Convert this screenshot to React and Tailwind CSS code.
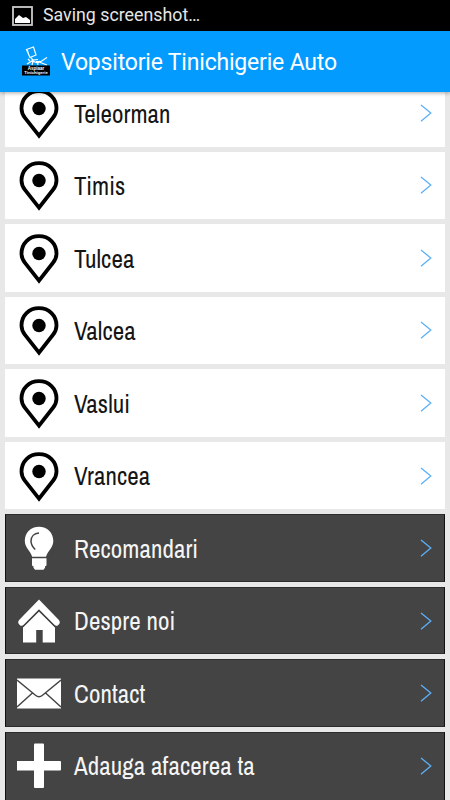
import React from "react";

const PinIcon = () => (
  <svg width="44" height="52" viewBox="0 0 44 52" fill="none">
    <path
      d="M22 48.600 8 30.800C5.400 27.600 4.500 25.400 4.500 21.500 4.500 11.500 12 4.200 22 4.200s17.500 7.300 17.500 17.300c0 3.900-.9 6.100-3.500 9.300z"
      stroke="#000"
      strokeWidth="3.8"
    />
    <circle cx="22" cy="21.500" r="6.700" fill="#000" />
  </svg>
);

const BulbIcon = () => (
  <svg width="44" height="52" viewBox="0 0 44 52" fill="none">
    <path
      d="M22 4.700c8.200 0 14.300 6.100 14.300 14 0 7-5.300 9.500-7.300 16H15.200c-2-6.500-7.400-9-7.400-16 0-7.900 6-14 14.200-14zM15 36.200h14.500v6.500a1.500 1.500 0 0 1-1.500 1.500v1.500l-1.500 2h-8.500l-1.500-2v-1.500a1.500 1.500 0 0 1-1.500-1.500z"
      fill="#fff"
    />
    <path d="M22 11c-5 .3-8 3.700-8 8.200 0 3.300 1.500 5.500 4.200 8.300" stroke="#444" strokeWidth="1.500" />
  </svg>
);

const HouseIcon = () => (
  <svg width="44" height="52" viewBox="0 0 44 52" fill="none">
    <path d="m22 16.500 16 16v15H25.700V35h-6.500v12.500H6v-15z" fill="#fff" />
    <path d="M4.800 27.200 22 9.500l17.200 17.700" stroke="#fff" strokeWidth="6.800" strokeLinecap="round" />
    <path d="M4.500 32.800 22 15.500l17.500 17.300" stroke="#444" strokeWidth="1.200" />
  </svg>
);

const MailIcon = () => (
  <svg width="44" height="52" viewBox="0 0 44 52" fill="none">
    <path d="M0 11.500h44v30H0z" fill="#fff" />
    <path
      d="m0 13 18.500 15.300c2.300 1.900 4.700 1.900 7 0L44 13M0 40l15.700-14.200M44 40 28.300 25.800"
      stroke="#444"
      strokeWidth="1.400"
    />
  </svg>
);

const PlusIcon = () => (
  <svg width="44" height="52" viewBox="0 0 44 52" fill="#fff">
    <rect x="17" y="3.500" width="10" height="44.500" rx="1" />
    <rect x="-.5" y="21" width="44.500" height="9.500" rx="1" />
  </svg>
);

const ChevronIcon = () => (
  <svg width="12" height="20" viewBox="0 0 12 20" fill="none">
    <path d="m1 2 9.800 8L1 18.200" stroke="#5cb0f8" strokeWidth="1.300" />
  </svg>
);

const AppLogo = () => (
  <svg width="30" height="32" viewBox="0 0 30 32" fill="none">
    <path
      d="m5.500 3.500 7-2.500 2.500 8-6 2.500zM6 3l1.500 5M10 12l2 2 5-.5M6 18l5-3 6 2 2-2M9 15l-2-2M15 15.500h5l6-4M18 16l8 3M12 15l-1 4M16 16l1 3"
      stroke="#fff"
      strokeWidth="1.200"
    />
    <rect x="1" y="19.500" width="28" height="10" fill="#000" />
    <text x="15" y="24" textAnchor="middle" fontSize="4.500" fontWeight="700" fill="#fff" fontFamily="Liberation Sans, sans-serif">
      Aspiaar
    </text>
    <text x="15" y="28.300" textAnchor="middle" fontSize="4.200" fontWeight="700" fill="#fff" fontFamily="Liberation Sans, sans-serif">
      Tinichigerie
    </text>
  </svg>
);

const counties = ["Teleorman", "Timis", "Tulcea", "Valcea", "Vaslui", "Vrancea"];

const links = [
  { name: "Recomandari", icon: <BulbIcon /> },
  { name: "Despre noi", icon: <HouseIcon /> },
  { name: "Contact", icon: <MailIcon /> },
  { name: "Adauga afacerea ta", icon: <PlusIcon /> },
];

const App = () => {
  return (
    <div className="flex h-[800px] w-[450px] flex-col overflow-hidden bg-[#e8e8e8]">
      {/* Status bar */}
      <div className="flex h-[31px] shrink-0 items-center bg-black pl-3 font-['Roboto',sans-serif] text-[17.800px] text-[#e6e6e6]">
        <svg width="21" height="20" viewBox="0 0 21 20" fill="none">
          <rect x="1" y="1" width="19" height="18" stroke="#ccc" strokeWidth="1.800" />
          <path d="M3 17v-4l4-4 4 3 3-1 4 3v3z" fill="#fff" />
        </svg>
        <span className="ml-[10px] whitespace-nowrap pb-px">Saving screenshot…</span>
      </div>

      {/* App bar */}
      <header className="z-10 flex h-[61px] shrink-0 items-center bg-[#049bff] pl-[21px] font-['Roboto',sans-serif] text-white shadow-[0_1px_4px_rgba(0,0,0,0.35)]">
        <AppLogo />
        <h1 className="ml-[10px] whitespace-nowrap pt-[3px] text-[23px] tracking-[-0.190px]">Vopsitorie Tinichigerie Auto</h1>
      </header>

      <main className="min-h-0 flex-1 overflow-hidden px-[5px]">
        <ul className="-mt-[13px] flex flex-col gap-[5px] font-['Archivo_Narrow','Liberation_Sans_Narrow','Liberation_Sans',sans-serif] text-[25px] tracking-[0.100px]">
          {counties.map((name) => (
            <li key={name} className="flex h-[67.550px] shrink-0 items-center bg-white pl-3 pr-[13px] text-[#151515]">
              <PinIcon />
              <span className="ml-[13px] flex-1 whitespace-nowrap pt-[3px]">{name}</span>
              <ChevronIcon />
            </li>
          ))}
          {links.map((item) => (
            <li
              key={item.name}
              className="flex h-[67.550px] shrink-0 items-center border border-x-[#111] border-y-[#2c2c2c] bg-[#444] pl-[11px] pr-3 text-[#f5f5f5] last:h-[69px] last:border-b-0 last:pb-[2.500px]"
            >
              {item.icon}
              <span className="ml-[13px] flex-1 whitespace-nowrap pt-[3px]">{item.name}</span>
              <ChevronIcon />
            </li>
          ))}
        </ul>
      </main>
    </div>
  );
};

export default App;
